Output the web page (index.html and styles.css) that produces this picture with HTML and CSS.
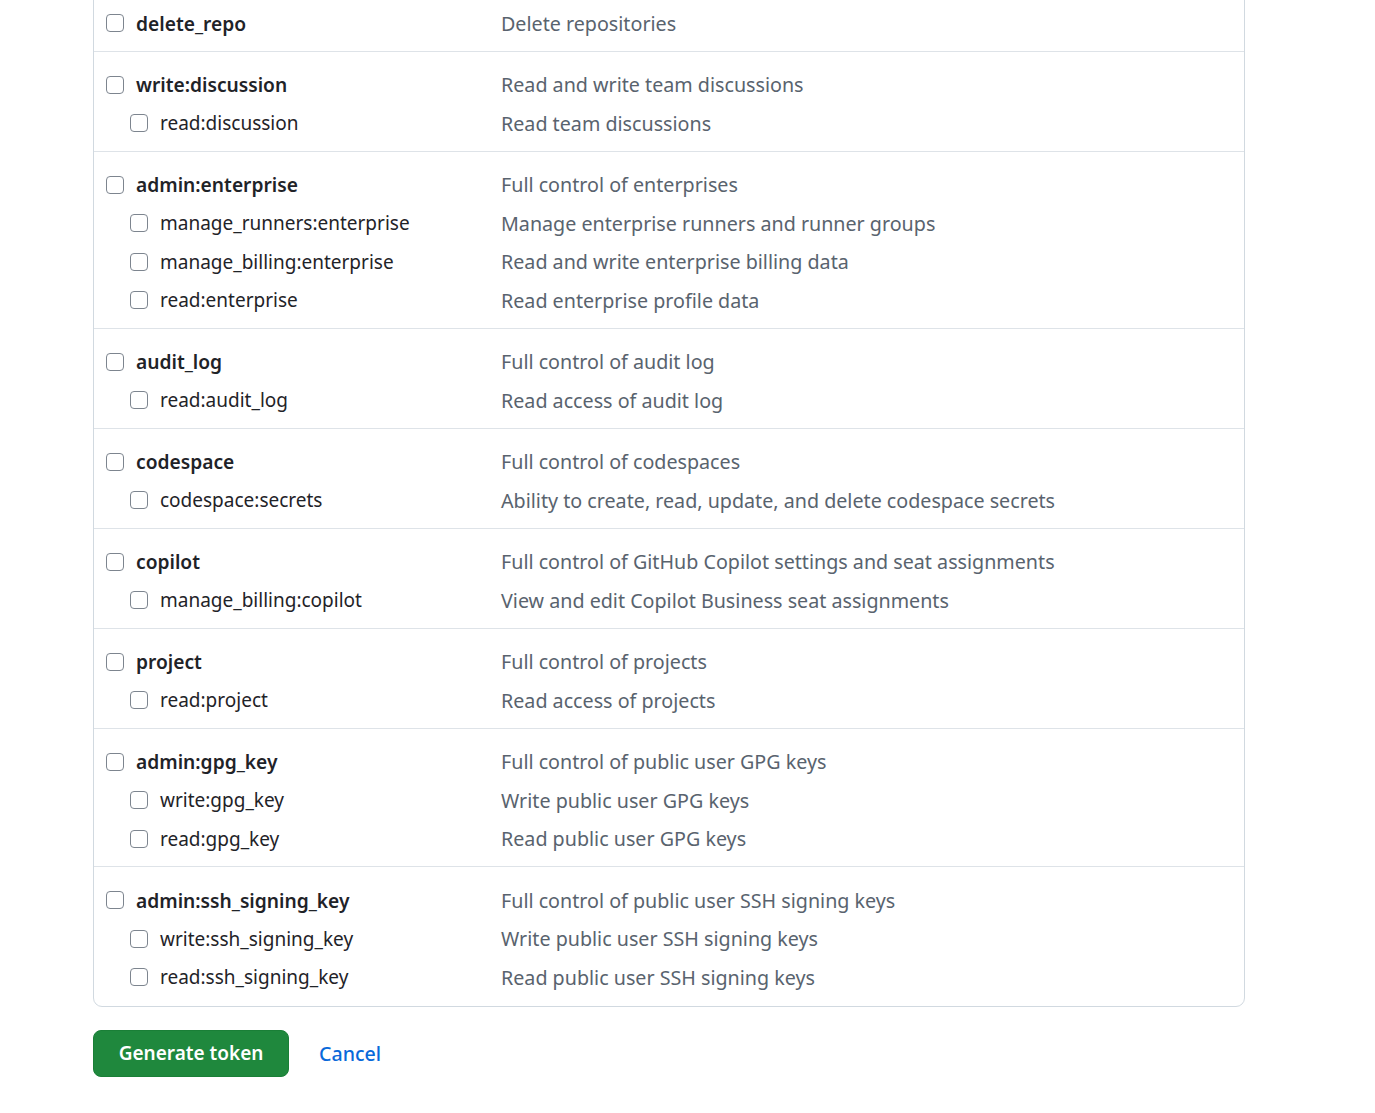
FILE: index.html
```html
<!DOCTYPE html>
<html lang="en">
<head>
<meta charset="utf-8">
<title>New personal access token</title>
<link rel="stylesheet" href="styles.css">
</head>
<body>
<div class="page">
  <div class="scopes">
    <div class="group">
      <div class="row main"><label class="name"><input type="checkbox">delete_repo</label><span class="desc">Delete repositories</span></div>
    </div>
    <div class="group">
      <div class="row main"><label class="name"><input type="checkbox">write:discussion</label><span class="desc">Read and write team discussions</span></div>
      <div class="row sub"><label class="name"><input type="checkbox">read:discussion</label><span class="desc">Read team discussions</span></div>
    </div>
    <div class="group">
      <div class="row main"><label class="name"><input type="checkbox">admin:enterprise</label><span class="desc">Full control of enterprises</span></div>
      <div class="row sub"><label class="name"><input type="checkbox">manage_runners:enterprise</label><span class="desc">Manage enterprise runners and runner groups</span></div>
      <div class="row sub"><label class="name"><input type="checkbox">manage_billing:enterprise</label><span class="desc">Read and write enterprise billing data</span></div>
      <div class="row sub"><label class="name"><input type="checkbox">read:enterprise</label><span class="desc">Read enterprise profile data</span></div>
    </div>
    <div class="group">
      <div class="row main"><label class="name"><input type="checkbox">audit_log</label><span class="desc">Full control of audit log</span></div>
      <div class="row sub"><label class="name"><input type="checkbox">read:audit_log</label><span class="desc">Read access of audit log</span></div>
    </div>
    <div class="group">
      <div class="row main"><label class="name"><input type="checkbox">codespace</label><span class="desc">Full control of codespaces</span></div>
      <div class="row sub"><label class="name"><input type="checkbox">codespace:secrets</label><span class="desc">Ability to create, read, update, and delete codespace secrets</span></div>
    </div>
    <div class="group">
      <div class="row main"><label class="name"><input type="checkbox">copilot</label><span class="desc">Full control of GitHub Copilot settings and seat assignments</span></div>
      <div class="row sub"><label class="name"><input type="checkbox">manage_billing:copilot</label><span class="desc">View and edit Copilot Business seat assignments</span></div>
    </div>
    <div class="group">
      <div class="row main"><label class="name"><input type="checkbox">project</label><span class="desc">Full control of projects</span></div>
      <div class="row sub"><label class="name"><input type="checkbox">read:project</label><span class="desc">Read access of projects</span></div>
    </div>
    <div class="group">
      <div class="row main"><label class="name"><input type="checkbox">admin:gpg_key</label><span class="desc">Full control of public user GPG keys</span></div>
      <div class="row sub"><label class="name"><input type="checkbox">write:gpg_key</label><span class="desc">Write public user GPG keys</span></div>
      <div class="row sub"><label class="name"><input type="checkbox">read:gpg_key</label><span class="desc">Read public user GPG keys</span></div>
    </div>
    <div class="group">
      <div class="row main"><label class="name"><input type="checkbox">admin:ssh_signing_key</label><span class="desc">Full control of public user SSH signing keys</span></div>
      <div class="row sub"><label class="name"><input type="checkbox">write:ssh_signing_key</label><span class="desc">Write public user SSH signing keys</span></div>
      <div class="row sub"><label class="name"><input type="checkbox">read:ssh_signing_key</label><span class="desc">Read public user SSH signing keys</span></div>
    </div>
  </div>
  <div class="actions">
    <button class="btn-primary" type="button">Generate token</button>
    <a class="cancel" href="#">Cancel</a>
  </div>
</div>
</body>
</html>
```

FILE: styles.css
```css
* { box-sizing: border-box; }
html, body { margin: 0; padding: 0; background: #ffffff; }
body {
  font-family: "Noto Sans", "Open Sans", sans-serif;
  font-size: 19px;
  color: #1f2328;
}
.page {
  width: 1152px;
  margin-left: 93px;
  margin-top: -11px;
}
.scopes {
  border: 1px solid #d1d9e0;
  border-radius: 9px;
}
.group {
  padding: 14px 0 8px 12px;
  border-top: 1px solid #dee3e8;
}
.group:first-child { border-top: none; }
.group:last-child { padding-bottom: 9px; }
.row {
  display: grid;
  grid-template-columns: 395px 1fr;
  height: 38.5px;
  align-items: center;
}
.name {
  display: flex;
  align-items: center;
  gap: 12px;
  white-space: nowrap;
}
.main .name { font-weight: 600; font-size: 19.2px; }
.sub .name { padding-left: 24px; font-weight: 400; }
.desc { color: #59636e; white-space: nowrap; font-size: 19.7px; }
input[type="checkbox"] {
  appearance: none;
  -webkit-appearance: none;
  margin: 0;
  width: 18px;
  height: 18px;
  border: 1.5px solid #7d858f;
  border-radius: 4px;
  background: #fff;
  flex: none;
}
.actions {
  display: flex;
  align-items: center;
  gap: 30px;
  margin-top: 23px;
}
.btn-primary {
  font-family: inherit;
  font-size: 19px;
  font-weight: 600;
  color: #ffffff;
  background: #1f883d;
  border: 1px solid #1a7f37;
  border-radius: 8px;
  height: 47px;
  width: 196px;
  padding: 0;
}
.cancel {
  font-size: 19.6px;
  font-weight: 500;
  color: #0969da;
  text-decoration: none;
}
```
